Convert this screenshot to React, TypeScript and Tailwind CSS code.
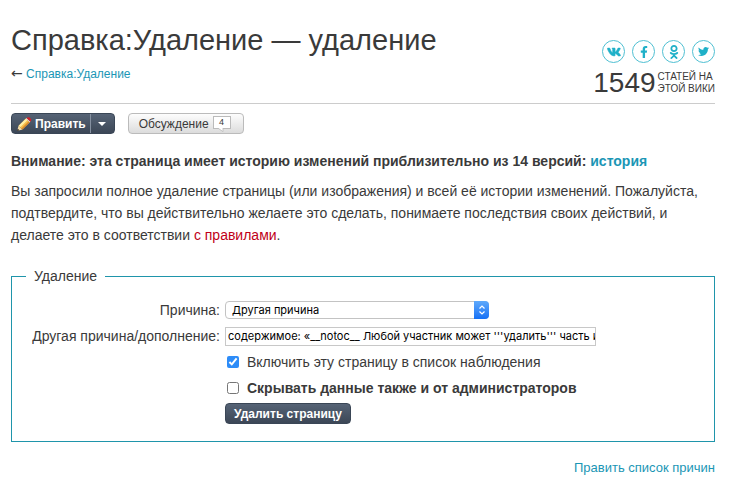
import type { ReactNode } from "react";
import { FaFacebookF, FaOdnoklassniki, FaTwitter, FaVk } from "react-icons/fa";

const socials = [
  { name: "ВКонтакте", icon: <FaVk className="w-3.5 h-3.5" strokeWidth={24} stroke="currentColor" /> },
  { name: "Facebook", icon: <FaFacebookF className="w-3 h-3" /> },
  { name: "Одноклассники", icon: <FaOdnoklassniki className="w-3.5 h-3.5" /> },
  { name: "Twitter", icon: <FaTwitter className="w-[11px] h-[11px]" /> },
];

function Link({ className = "text-[#1b96b5]", children }: { className?: string; children: ReactNode }) {
  return (
    <a href="#" className={`${className} hover:underline`}>
      {children}
    </a>
  );
}

function Pencil() {
  return (
    <svg viewBox="0 0 16 16" className="w-4 h-4">
      <path d="M1 15l1.6-5.2 3.8 3.6z" fill="#f3d9a4" />
      <path d="M1 15l.7-2.3 1.7 1.6z" fill="#1d1d1d" />
      <path d="M2.6 9.8L10 2.6l3.8 3.6-7.4 7.2z" fill="#f7c04a" />
      <path d="M2.6 9.8L10 2.6l1.6 1.5-7.4 7.2z" fill="#fff0a8" />
      <path d="M5.4 12.4l7.4-7.2 1 1-7.4 7.2z" fill="#d88a2c" />
      <path d="M10 2.6l.6-.6 3.8 3.6-.6.6z" fill="#eee" />
      <path d="M10.5 2.1c.9-1 2.2-1.2 3.1-.5l1.2 1.2c.7.7.6 1.9-.4 2.9z" fill="#d2222a" />
    </svg>
  );
}

function Header() {
  return (
    <header className="flex items-end justify-between border-b border-[#ccc] pb-1">
      <div className="pb-[15px]">
        <h1 className="text-[29px] leading-8">Справка:Удаление — удаление</h1>
        <p className="mt-2 text-[12px] leading-5">
          <span className="font-['DejaVu_Sans',sans-serif] text-[14px] leading-none">←</span>{" "}
          <Link>Справка:Удаление</Link>
        </p>
      </div>
      <div className="flex flex-col items-end">
        <div className="flex gap-[7px]">
          {socials.map((s) => (
            <a
              key={s.name}
              href="#"
              aria-label={s.name}
              className="flex h-[23px] w-[23px] items-center justify-center rounded-full border border-[#4fbfd2] text-[#1fb0c8]"
            >
              {s.icon}
            </a>
          ))}
        </div>
        <div className="mt-1 flex items-center gap-0.5">
          <span className="text-[28px] leading-8">1549</span>
          <span className="text-[10px] leading-3 uppercase">
            Статей на
            <br />
            этой вики
          </span>
        </div>
      </div>
    </header>
  );
}

function Toolbar() {
  return (
    <div className="mt-[9px] flex gap-[13px]">
      <div className="flex h-[21px] overflow-hidden rounded border border-[#3a4656] bg-linear-to-b from-[#566376] to-[#3c4756] text-white">
        <button className="flex items-center gap-[3px] pr-1 pl-1 text-[12px] font-bold">
          <Pencil />
          Править
        </button>
        <button aria-label="Ещё" className="flex w-6 items-center justify-center border-l border-[#8590a0]">
          <svg viewBox="0 0 8 4" className="h-1 w-2">
            <path d="M0 0h8L4 4z" fill="#fff" />
          </svg>
        </button>
      </div>
      <button className="flex h-[21px] items-center gap-1 rounded border border-[#bbb] bg-linear-to-b from-[#fdfdfd] to-[#dcdcdc] pr-3 pl-2.5 text-[12px]">
        Обсуждение
        <span className="relative mb-0.5 flex h-[13px] w-[18px] items-center justify-center border border-[#bbb] bg-white text-[9px]">
          4
          <svg viewBox="0 0 6 4" className="absolute top-full left-1 h-1 w-1.5">
            <path d="M0 0h5v3.5z" fill="#fff" />
            <path d="M0 .2L5 3.6V0" fill="none" stroke="#bbb" strokeWidth=".8" />
          </svg>
        </span>
      </button>
    </div>
  );
}

function DeleteForm() {
  return (
    <fieldset className="mt-5 border border-[#1f95ab] px-3.5 pb-[17px]">
      <legend className="px-2 text-[14px] leading-5">Удаление</legend>
      <div className="mt-[13px] grid grid-cols-[194px_1fr] items-center gap-x-[5px] gap-y-1 text-[14px] leading-[22px]">
        <label htmlFor="reason" className="text-right">
          Причина:
        </label>
        <div className="relative w-[264px]">
          <select
            id="reason"
            className="block h-[18px] w-full appearance-none rounded border border-[#c3c3c3] bg-white px-1.5 font-[Inter,sans-serif] text-[11px] leading-4 text-black"
          >
            <option>Другая причина</option>
          </select>
          <span className="pointer-events-none absolute inset-y-0 right-0 flex w-[15px] items-center justify-center rounded-r bg-linear-to-b from-[#5ea9fb] to-[#1370f5]">
            <svg viewBox="0 0 8 10" className="h-2.5 w-2" fill="none" stroke="#fff" strokeWidth="1.2">
              <path d="M1.5 3.5L4 1l2.5 2.5M1.5 6.5L4 9l2.5-2.5" />
            </svg>
          </span>
        </div>
        <label htmlFor="details" className="text-right whitespace-nowrap">
          Другая причина/дополнение:
        </label>
        <input
          id="details"
          type="text"
          className="h-[19px] w-[371px] border border-[#c8c8c8] pl-0.5 font-[Inter,sans-serif] text-[11px] text-black"
          defaultValue={`содержимое: «__notoc__ Любой участник может '''удалить''' часть и`}
        />
        <label className="col-start-2 flex items-center gap-2 pl-0.5">
          <input type="checkbox" defaultChecked className="h-3 w-3 accent-[#2d8cf8]" />
          Включить эту страницу в список наблюдения
        </label>
        <label className="col-start-2 flex items-center gap-2 pl-0.5 font-bold">
          <input type="checkbox" className="h-3 w-3 accent-[#2d8cf8]" />
          Скрывать данные также и от администраторов
        </label>
        <div className="col-start-2">
          <button className="block h-[21px] rounded border border-[#3a4656] bg-linear-to-b from-[#566376] to-[#3c4756] px-2 text-[12px] leading-4 font-bold text-white">
            Удалить страницу
          </button>
        </div>
      </div>
    </fieldset>
  );
}

export default function App() {
  return (
    <main className="min-h-screen bg-white px-[11px] pt-6 pr-4 font-['Liberation_Sans',Arial,sans-serif] text-[#3a3a3a]">
      <Header />
      <Toolbar />
      <p className="mt-4 text-[14px] leading-[22px] font-bold">
        Внимание: эта страница имеет историю изменений приблизительно из 14 версий: <Link>история</Link>
      </p>
      <p className="mt-2 text-[14px] leading-[22px]">
        Вы запросили полное удаление страницы (или изображения) и всей её истории изменений. Пожалуйста,
        подтвердите, что вы действительно желаете это сделать, понимаете последствия своих действий, и делаете
        это в соответствии <Link className="text-[#c00018]">с правилами</Link>.
      </p>
      <DeleteForm />
      <p className="mt-4 text-right text-[13px] leading-5">
        <Link>Править список причин</Link>
      </p>
    </main>
  );
}
